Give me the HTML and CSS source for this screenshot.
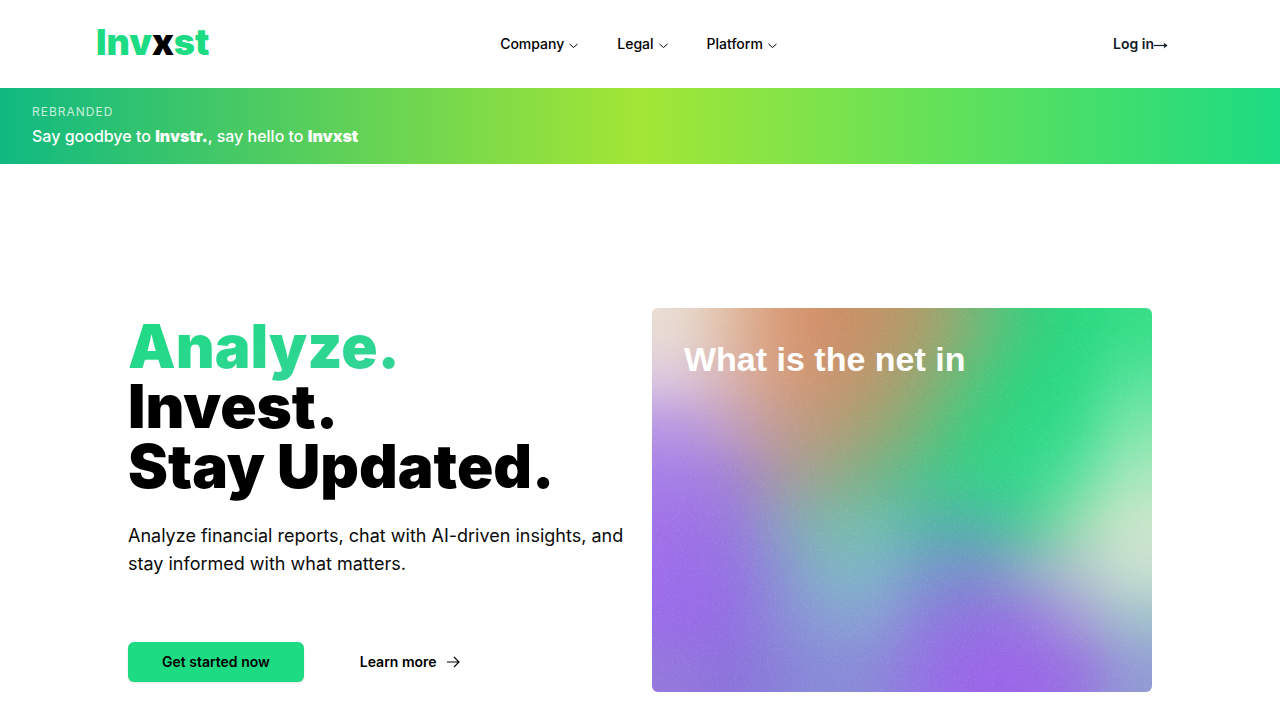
FILE: index.html
```html
<!DOCTYPE html>
<html lang="en">
<head>
<meta charset="utf-8">
<meta name="viewport" content="width=device-width, initial-scale=1">
<title>Invxst</title>
<link rel="stylesheet" href="styles.css">
</head>
<body>
<header class="header">
  <a class="logo" href="#">Inv<span class="logo-x">x</span>st</a>
  <nav class="nav">
    <button class="nav-item" type="button">Company <svg class="chevron" viewBox="0 0 15 15"><path d="M3.5 6 7.5 9.5 11.5 6"/></svg></button>
    <button class="nav-item" type="button">Legal <svg class="chevron" viewBox="0 0 15 15"><path d="M3.5 6 7.5 9.5 11.5 6"/></svg></button>
    <button class="nav-item" type="button">Platform <svg class="chevron" viewBox="0 0 15 15"><path d="M3.5 6 7.5 9.5 11.5 6"/></svg></button>
  </nav>
  <a class="login" href="#">Log in<svg class="login-arrow" viewBox="0 0 14 14"><path d="M0 8.5h13"/><path class="head" d="M9.5 5.5 13.5 8.5 9.5 11.5 10.5 8.5z"/></svg></a>
</header>
<section class="banner">
  <p class="banner-label">REBRANDED</p>
  <p class="banner-text">Say goodbye to <strong>Invstr.</strong>, say hello to <strong>Invxst</strong></p>
</section>
<main class="hero">
  <div class="intro">
    <h1 class="title"><span class="title-accent">Analyze.</span><br>Invest.<br>Stay Updated.</h1>
    <p class="lead">Analyze financial reports, chat with AI-driven insights, and stay informed with what matters.</p>
    <div class="actions">
      <a class="button button-primary" href="#">Get started now</a>
      <a class="button" href="#">Learn more <svg class="arrow" viewBox="0 0 16 16"><path d="M2 8h12M9 3l5 5-5 5"/></svg></a>
    </div>
  </div>
  <div class="card">
    <div class="mesh">
      <div class="band band-1"></div>
      <div class="band band-2"></div>
      <div class="band band-3"></div>
      <div class="band band-4"></div>
      <div class="band band-5"></div>
      <div class="band band-6"></div>
      <div class="band band-7"></div>
      <div class="band band-8"></div>
    </div>
    <svg class="grain"><filter id="grain"><feTurbulence type="fractalNoise" baseFrequency="0.6" numOctaves="2" seed="4"/><feColorMatrix values="0 0 0 0 1  0 0 0 0 1  0 0 0 0 1  2.4 0 0 0 -1.3"/></filter><rect width="100%" height="100%" filter="url(#grain)"/></svg>
    <p class="card-text">What is the net in</p>
  </div>
</main>
</body>
</html>
```
FILE: styles.css
```css
* { box-sizing: border-box; }
body {
  margin: 0;
  background: #fff;
  color: #000;
  font-family: Inter, "Liberation Sans", sans-serif;
}
p, h1 { margin: 0; }
a { color: inherit; text-decoration: none; }
svg { fill: none; stroke: currentColor; flex: none; }

.header {
  display: grid;
  grid-template-columns: 1fr auto 1fr;
  align-items: center;
  height: 88px;
  padding: 0 96px;
}
.logo {
  justify-self: start;
  padding-bottom: 4px;
  color: #1cdb82;
  font: 900 36px/40px Inter, sans-serif;
}
.logo-x { color: #000; }
.nav { display: flex; gap: 36px; }
.nav-item {
  display: flex;
  align-items: center;
  gap: 2px;
  padding: 0;
  border: 0;
  background: none;
  color: inherit;
  font: 500 14px/20px Inter, sans-serif;
}
.chevron { width: 15px; height: 15px; margin-top: 2px; }
.login {
  display: flex;
  align-items: center;
  justify-self: end;
  padding-right: 16px;
  color: #111827;
  font: 600 14px/20px Inter, sans-serif;
}
.login-arrow { width: 14px; height: 14px; stroke-width: 1.2; }
.head { fill: currentColor; stroke: none; }

.banner {
  padding: 16px 32px;
  background: linear-gradient(to right, #10b981, #a3e635, #1cdb82);
  color: #fff;
}
.banner-label {
  color: rgb(255 255 255 / .75);
  font: 400 12px/16px Inter, sans-serif;
  letter-spacing: 1px;
}
.banner-text {
  margin-top: 4px;
  font: 500 16px/24px Inter, sans-serif;
}
.banner-text strong { font-weight: 900; }

.hero {
  display: grid;
  grid-template-columns: 1fr 1fr;
  gap: 24px;
  max-width: 1280px;
  margin: 0 auto;
  padding: 144px 128px 28px;
}
.title {
  padding-top: 8px;
  font: 900 60px/60px Inter, sans-serif;
}
.title-accent {
  background: linear-gradient(to bottom right, #1cdb82, #36d399);
  -webkit-background-clip: text;
  background-clip: text;
  color: transparent;
}
.lead {
  margin-top: 26px;
  color: #0a0a0a;
  font: 400 18px/28px Inter, sans-serif;
}
.actions { display: flex; gap: 22px; margin-top: 64px; }
.button {
  display: flex;
  align-items: center;
  justify-content: center;
  gap: 8px;
  height: 40px;
  padding: 0 34px;
  border-radius: 6px;
  font: 600 14px/20px Inter, sans-serif;
}
.button-primary { background: #1cdb82; box-shadow: 0 1px 2px rgb(0 0 0 / .12); }
.arrow { width: 16px; height: 16px; stroke-width: 1.2; }

.card {
  position: relative;
  overflow: hidden;
  min-height: 384px;
  padding: 32px;
  border-radius: 6px;
}
.mesh {
  position: absolute;
  inset: -48px -50px;
  display: grid;
  grid-template-rows: 2fr repeat(6, 1fr) 2fr;
  filter: blur(20px);
}
.band-1 { background: linear-gradient(to right, #e9ddd4 12.5%, #e0bea6, #d99c78, #d08e68, #c09468, #a89f6a, #72b878, #3acd7c, #27d880, #38de88 87.5%); }
.band-2 { background: linear-gradient(to right, #dcc8e0 12.5%, #d8b4b4, #d59f80, #cb9470, #b59a6c, #8cab74, #52c47a, #2bd57f, #2bda84, #58e39c 87.5%); }
.band-3 { background: linear-gradient(to right, #b795e4 12.5%, #c0a0c8, #c29c94, #b89b78, #9ba574, #6bb87a, #3bcf7e, #2ad783, #38dc8e, #80e6ac 87.5%); }
.band-4 { background: linear-gradient(to right, #a67fe8 12.5%, #a080d8, #a897a8, #98a888, #74b488, #50c28c, #34d088, #32d88c, #5ee09e, #a8e8bc 87.5%); }
.band-5 { background: linear-gradient(to right, #a072e8 12.5%, #9a76e0, #8c9cc4, #7cb8a8, #70bfae, #56b4a8, #50b4a8, #52cc98, #98dcb0, #cce6cc 87.5%); }
.band-6 { background: linear-gradient(to right, #9c6eea 12.5%, #966ee4, #8a90d4, #80b4c4, #7eb4c8, #7896cc, #7a8ccc, #90acc8, #b0c4cc, #c8e0d0 87.5%); }
.band-7 { background: linear-gradient(to right, #9a6ce8 12.5%, #946ce4, #8a88d8, #88a0d4, #88a0d4, #8c7cdc, #9070e0, #9678e0, #a49cd8, #a0c0cc 87.5%); }
.band-8 { background: linear-gradient(to right, #9478dc 12.5%, #8c70dc, #8880d8, #888cd8, #8a88d8, #9470e4, #9a66e8, #9a66e8, #9872e0, #929cd4 87.5%); }
.grain { position: absolute; inset: 0; width: 100%; height: 100%; stroke: none; opacity: .15; }
.card-text {
  position: relative;
  color: #fff;
  font: 700 34px/38px "Liberation Sans", Arial, sans-serif;
}
```
